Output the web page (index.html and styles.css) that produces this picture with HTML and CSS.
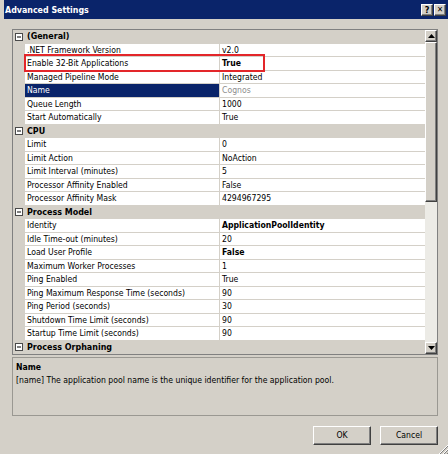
FILE: index.html
```html
<!DOCTYPE html>
<html lang="en">
<head>
<meta charset="utf-8">
<title>Advanced Settings</title>
<link rel="stylesheet" href="styles.css">
</head>
<body>
<div class="window">
  <div class="titlebar">
    <span class="title">Advanced Settings</span>
    <div class="tbuttons">
      <span class="tbtn">?</span>
      <span class="tbtn tbtn-x">✕</span>
    </div>
  </div>

  <div class="grid">
    <div class="rows">
      <div class="row cat"><span class="gut"><svg class="minus" viewBox="0 0 8 8" width="8" height="8"><rect x="0.5" y="0.5" width="7" height="7" fill="#fff" stroke="#4a4a4a"/><line x1="2" y1="4" x2="6" y2="4" stroke="#000"/></svg></span><span class="cname">(General)</span></div>
      <div class="row"><span class="gut"></span><span class="name">.NET Framework Version</span><span class="value">v2.0</span></div>
      <div class="row"><span class="gut"></span><span class="name">Enable 32-Bit Applications</span><span class="value bold">True</span></div>
      <div class="row"><span class="gut"></span><span class="name">Managed Pipeline Mode</span><span class="value">Integrated</span></div>
      <div class="row"><span class="gut"></span><span class="name sel">Name</span><span class="value dim">Cognos</span></div>
      <div class="row"><span class="gut"></span><span class="name">Queue Length</span><span class="value">1000</span></div>
      <div class="row"><span class="gut"></span><span class="name">Start Automatically</span><span class="value">True</span></div>
      <div class="row cat"><span class="gut"><svg class="minus" viewBox="0 0 8 8" width="8" height="8"><rect x="0.5" y="0.5" width="7" height="7" fill="#fff" stroke="#4a4a4a"/><line x1="2" y1="4" x2="6" y2="4" stroke="#000"/></svg></span><span class="cname">CPU</span></div>
      <div class="row"><span class="gut"></span><span class="name">Limit</span><span class="value">0</span></div>
      <div class="row"><span class="gut"></span><span class="name">Limit Action</span><span class="value">NoAction</span></div>
      <div class="row"><span class="gut"></span><span class="name">Limit Interval (minutes)</span><span class="value">5</span></div>
      <div class="row"><span class="gut"></span><span class="name">Processor Affinity Enabled</span><span class="value">False</span></div>
      <div class="row"><span class="gut"></span><span class="name">Processor Affinity Mask</span><span class="value">4294967295</span></div>
      <div class="row cat"><span class="gut"><svg class="minus" viewBox="0 0 8 8" width="8" height="8"><rect x="0.5" y="0.5" width="7" height="7" fill="#fff" stroke="#4a4a4a"/><line x1="2" y1="4" x2="6" y2="4" stroke="#000"/></svg></span><span class="cname">Process Model</span></div>
      <div class="row"><span class="gut"></span><span class="name">Identity</span><span class="value bold">ApplicationPoolIdentity</span></div>
      <div class="row"><span class="gut"></span><span class="name">Idle Time-out (minutes)</span><span class="value">20</span></div>
      <div class="row"><span class="gut"></span><span class="name">Load User Profile</span><span class="value bold">False</span></div>
      <div class="row"><span class="gut"></span><span class="name">Maximum Worker Processes</span><span class="value">1</span></div>
      <div class="row"><span class="gut"></span><span class="name">Ping Enabled</span><span class="value">True</span></div>
      <div class="row"><span class="gut"></span><span class="name">Ping Maximum Response Time (seconds)</span><span class="value">90</span></div>
      <div class="row"><span class="gut"></span><span class="name">Ping Period (seconds)</span><span class="value">30</span></div>
      <div class="row"><span class="gut"></span><span class="name">Shutdown Time Limit (seconds)</span><span class="value">90</span></div>
      <div class="row"><span class="gut"></span><span class="name">Startup Time Limit (seconds)</span><span class="value">90</span></div>
      <div class="row cat"><span class="gut"><svg class="minus" viewBox="0 0 8 8" width="8" height="8"><rect x="0.5" y="0.5" width="7" height="7" fill="#fff" stroke="#4a4a4a"/><line x1="2" y1="4" x2="6" y2="4" stroke="#000"/></svg></span><span class="cname">Process Orphaning</span></div>
    </div>
    <div class="scrollbar">
      <span class="sbtn"><svg viewBox="0 0 7 4" width="7" height="4"><polygon points="3.5,0 7,4 0,4" fill="#000"/></svg></span>
      <span class="thumb"></span>
      <span class="track"></span>
      <span class="sbtn"><svg viewBox="0 0 7 4" width="7" height="4"><polygon points="0,0 7,0 3.5,4" fill="#000"/></svg></span>
    </div>
  </div>

  <div class="desc">
    <div class="desc-title">Name</div>
    <div class="desc-text">[name] The application pool name is the unique identifier for the application pool.</div>
  </div>

  <div class="actions">
    <span class="btn">OK</span>
    <span class="btn">Cancel</span>
  </div>

  <div class="highlight"></div>
  <svg class="grip" viewBox="0 0 10 10" width="10" height="10">
    <line x1="10" y1="1" x2="1" y2="10" stroke="#fff"/>
    <line x1="10" y1="2" x2="2" y2="10" stroke="#808080"/>
    <line x1="10" y1="5" x2="5" y2="10" stroke="#fff"/>
    <line x1="10" y1="6" x2="6" y2="10" stroke="#808080"/>
    <line x1="10" y1="9" x2="9" y2="10" stroke="#808080"/>
  </svg>
</div>
</body>
</html>
```

FILE: styles.css
```css
* { box-sizing: border-box; }

html, body {
  margin: 0;
  padding: 0;
  background: #d4d0c8;
}

body {
  width: 448px;
  height: 454px;
  overflow: hidden;
  font-family: "DejaVu Sans Condensed", "DejaVu Sans", "Liberation Sans", sans-serif;
  font-stretch: condensed;
  font-size: 8.6px;
  color: #000;
}

.window {
  position: relative;
  width: 448px;
  height: 454px;
  display: flex;
  flex-direction: column;
}

.titlebar {
  height: 19px;
  margin-left: 4px;
  background: #0a246a;
  display: flex;
  align-items: center;
  padding-left: 1px;
}

.title {
  color: #fff;
  font-weight: bold;
  font-size: 8.8px;
}

.tbuttons {
  margin-left: auto;
  display: flex;
  gap: 1px;
  margin-right: 2px;
}

.tbtn {
  width: 12px;
  height: 12px;
  background: #d4d0c8;
  border-top: 1px solid #fff;
  border-left: 1px solid #fff;
  border-right: 1px solid #404040;
  border-bottom: 1px solid #404040;
  box-shadow: inset -1px -1px 0 #808080;
  font-weight: bold;
  font-size: 9px;
  line-height: 10px;
  text-align: center;
  color: #000;
}

.tbtn-x { font-size: 8px; }

.grid {
  margin: 10px 0 0 12px;
  width: 426px;
  height: 326px;
  border: 1px solid #808080;
  display: flex;
  background: #fff;
}

.rows {
  flex: 1;
  overflow: hidden;
}

.row {
  height: 13.5px;
  display: grid;
  grid-template-columns: 12px 195px 1fr;
  line-height: 12.5px;
  white-space: nowrap;
}

.gut { background: #d4d0c8; display: flex; align-items: center; justify-content: center; }

.name, .value {
  background: #fff;
  border-bottom: 1px solid #d4d0c8;
  padding-left: 2px;
  overflow: hidden;
}

.name { border-right: 1px solid #d4d0c8; }

.sel { background: #0a246a; color: #fff; }

.dim { color: #8c8c8c; }

.bold { font-weight: bold; }

.row.cat { background: #d4d0c8; }

.cname {
  grid-column: 2 / 4;
  font-weight: bold;
  padding-left: 2px;
  font-size: 8.9px;
}

.minus { display: block; }

.scrollbar {
  width: 12px;
  display: flex;
  flex-direction: column;
  background: #ecebe6;
}

.sbtn, .thumb {
  background: #d4d0c8;
  border-top: 1px solid #fff;
  border-left: 1px solid #fff;
  border-right: 1px solid #404040;
  border-bottom: 1px solid #404040;
  box-shadow: inset -1px -1px 0 #808080;
}

.sbtn {
  height: 12px;
  display: flex;
  align-items: center;
  justify-content: center;
}

.sbtn svg { display: block; }

.thumb { height: 160px; }

.track { flex: 1; }

.desc {
  margin: 2px 0 0 12px;
  width: 426px;
  height: 59px;
  border: 1px solid #9a9892;
  padding: 2px 3px;
}

.desc-title { font-weight: bold; line-height: 14px; }

.desc-text { line-height: 13px; }

.actions {
  display: flex;
  justify-content: flex-end;
  gap: 9px;
  width: 438px;
  margin-top: 10px;
}

.btn {
  width: 58px;
  height: 19px;
  background: #d4d0c8;
  border-top: 1px solid #fff;
  border-left: 1px solid #fff;
  border-right: 1px solid #404040;
  border-bottom: 1px solid #404040;
  box-shadow: inset -1px -1px 0 #808080;
  text-align: center;
  line-height: 17px;
}

.highlight {
  position: absolute;
  left: 24px;
  top: 54px;
  width: 241px;
  height: 18px;
  border: 2px solid #e3262a;
}

.grip {
  position: absolute;
  right: 0;
  bottom: 0;
}
```
